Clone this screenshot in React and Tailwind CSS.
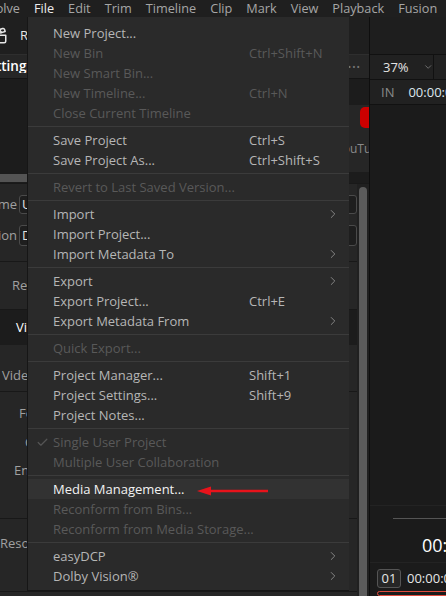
import React from "react";
import { ChevronRight, ChevronDown, Check, Clapperboard } from "lucide-react";

const bar = ["File", "Edit", "Trim", "Timeline", "Clip", "Mark", "View", "Playback", "Fusion"];

const items = [
  { label: "New Project..." },
  { label: "New Bin", keys: "Ctrl+Shift+N", off: true },
  { label: "New Smart Bin...", off: true },
  { label: "New Timeline...", keys: "Ctrl+N", off: true },
  { label: "Close Current Timeline", off: true },
  "sep",
  { label: "Save Project", keys: "Ctrl+S" },
  { label: "Save Project As...", keys: "Ctrl+Shift+S" },
  "sep",
  { label: "Revert to Last Saved Version...", off: true },
  "sep",
  { label: "Import", sub: true },
  { label: "Import Project..." },
  { label: "Import Metadata To", sub: true },
  "sep",
  { label: "Export", sub: true },
  { label: "Export Project...", keys: "Ctrl+E" },
  { label: "Export Metadata From", sub: true },
  "sep",
  { label: "Quick Export...", off: true },
  "sep",
  { label: "Project Manager...", keys: "Shift+1" },
  { label: "Project Settings...", keys: "Shift+9" },
  { label: "Project Notes..." },
  "sep",
  { label: "Single User Project", off: true, check: true },
  { label: "Multiple User Collaboration", off: true },
  "sep",
  { label: "Media Management...", active: true, arrow: true },
  { label: "Reconform from Bins...", off: true },
  { label: "Reconform from Media Storage...", off: true },
  "sep",
  { label: "easyDCP", sub: true },
  { label: "Dolby Vision®", sub: true },
];

function MenuRow({ item }) {
  if (item === "sep") {
    return (
      <div className="h-[7px] flex items-center">
        <div className="h-px w-full bg-[#3b3b3b]" />
      </div>
    );
  }
  const color = item.active ? "text-[#f2f2f2]" : item.off ? "text-[#595959]" : "text-[#b6b6b6]";
  return (
    <div className={`relative h-[20px] flex items-center ${item.active ? "bg-[#323232]" : ""} ${color}`}>
      <div className="w-[25px] flex justify-center pl-[3px]">
        {item.check && <Check size={13} strokeWidth={2.2} className="text-[#555]" />}
      </div>
      <span className="w-[196px] whitespace-nowrap">{item.label}</span>
      <span className="flex-1 whitespace-nowrap">{item.keys}</span>
      {item.sub && <ChevronRight size={14} strokeWidth={1.6} className="text-[#8a8a8a] mr-[9px]" />}
      {item.arrow && (
        <svg className="absolute left-[168px] top-[6px]" width="74" height="12" viewBox="0 0 74 12">
          <line x1="12" y1="6" x2="72" y2="6" stroke="#e8131b" strokeWidth="2.6" />
          <polygon points="1,6 15,1.5 15,10.5" fill="#e8131b" />
        </svg>
      )}
    </div>
  );
}

function Clip({ text, w, className = "" }) {
  return (
    <div className={`shrink-0 flex justify-end overflow-hidden whitespace-nowrap ${className}`} style={{ width: w }}>
      <span>{text}</span>
    </div>
  );
}

export default function App() {
  return (
    <div className="relative w-[446px] h-[596px] overflow-hidden bg-[#1c1c1c] font-['Open_Sans',sans-serif] text-[13px] leading-none">
      {/* menu bar */}
      <div className="h-[17px] flex items-center gap-[14px] bg-[#1f1f1f] text-[#a6a6a6] text-[12.7px]">
        <Clip text="DaVinci Resolve" w={20} />
        {bar.map((b) => (
          <span key={b} className={b === "File" ? "text-[#ececec]" : ""}>{b}</span>
        ))}
      </div>

      <div className="flex h-[579px]">
        {/* left panel */}
        <div className="w-[369px] shrink-0 flex flex-col">
          <div className="h-[38px] shrink-0 flex items-center gap-[12px] bg-[#1f1f1f] border-b border-[#2e2e2e]">
            <Clapperboard size={18} strokeWidth={2} className="text-[#e6e6e6] -ml-[10px]" />
            <span className="text-[#e6e6e6]">Render Queue</span>
          </div>
          <div className="h-[24px] shrink-0 flex items-center justify-between bg-[#262626] border-b border-[#141414] pr-[8px]">
            <Clip text="Render Settings" w={33} className="text-white font-semibold text-[13.5px]" />
            <span className="text-[#777] text-[9px] tracking-[1px]">•••</span>
          </div>
          <div className="h-[104px] shrink-0 flex flex-col bg-[#1c1c1c]">
            <div className="flex-1 flex pt-[26px] justify-end">
              <div className="w-[33px] h-[67px] bg-[#262626] overflow-hidden flex flex-col">
                <div className="pl-[24px] pt-[2px]">
                  <div className="w-[30px] h-[21px] rounded-[5px] bg-[#cc0000]" />
                </div>
                <span className="mt-[15px] text-[#8a8a8a] text-[12px] whitespace-nowrap">YouTube</span>
              </div>
            </div>
            <div className="h-[8px] w-[220px] bg-[#545454] mb-[1px]" />
          </div>

          <div className="flex-1 min-h-0 flex bg-[#262626] border-t border-[#191919]">
            <div className="w-[357px] flex flex-col text-[#a0a0a0] overflow-hidden">
              <div className="shrink-0 pt-[11px] pb-[15px] flex flex-col gap-[11px] border-b border-[#181818]">
                <div className="flex items-center gap-[2px]">
                  <Clip text="File name" w={17} />
                  <div className="h-[19px] flex-1 rounded-[3px] border border-[#4a4a4a] bg-[#1e1e1e] text-[#e0e0e0] flex items-center pl-[2px]">Untitled</div>
                </div>
                <div className="flex items-center gap-[2px]">
                  <Clip text="Location" w={17} />
                  <div className="h-[21px] flex-1 rounded-[3px] border border-[#4a4a4a] bg-[#1e1e1e] text-[#e0e0e0] flex items-center pl-[2px]">D:\</div>
                </div>
              </div>
              <div className="h-[48px] shrink-0 flex items-center pl-[12px] border-b border-[#181818]">Render</div>
              <div className="h-[35px] shrink-0 flex items-center pl-[16px] bg-[#1c1c1c] text-white">Video</div>
              <div className="h-[47px] shrink-0 flex items-center pt-[14px] border-b border-[#181818]">
                <Clip text="Export Video" w={36} />
              </div>
              <div className="h-[127px] shrink-0 flex flex-col pt-[15px] gap-[15.5px] border-b border-[#181818]">
                <span className="pl-[19px]">Format</span>
                <span className="pl-[25px]">Codec</span>
                <span className="pl-[14px]">Encoder</span>
              </div>
              <div className="h-[73px] shrink-0 pt-[18px] border-b border-[#181818]">Resolution</div>
              <div className="flex-1 min-h-0 pt-[4px]">Frame rate</div>
            </div>
            <div className="flex-1 bg-[#202020] flex pl-[2px] pt-[3px]">
              <div className="w-[8px] h-full rounded-t-[4px] bg-[#5b5b5b]" />
            </div>
          </div>
        </div>

        <div className="w-px shrink-0 bg-[#0e0e0e]" />

        {/* viewer */}
        <div className="flex-1 flex flex-col bg-[#1b1b1b]">
          <div className="h-[38px] shrink-0 bg-[#1e1e1e] border-b border-[#111]" />
          <div className="h-[25px] shrink-0 flex bg-[#212121] border-b border-[#111]">
            <div className="w-[64px] flex items-center pl-[13px] gap-[14px] border-r border-[#111]">
              <span className="text-[#e4e4e4]">37%</span>
              <ChevronDown size={12} strokeWidth={2} className="text-[#777]" />
            </div>
          </div>
          <div className="h-[25px] shrink-0 flex items-center pl-[11px] gap-[14px] bg-[#212121] border-b border-[#111] whitespace-nowrap">
            <span className="text-[#8a8a8a]">IN</span>
            <span className="text-[#dde6ee]">00:00:00:00</span>
          </div>
          <div className="flex-1" />
          <div className="h-[58px] shrink-0 flex flex-col border-t border-[#232323] border-b border-[#111]">
            <div className="h-px ml-[23px] mt-[12px] bg-[#555]" />
            <span className="mt-[17px] ml-[52px] text-white text-[18px] whitespace-nowrap">00:00:00</span>
          </div>
          <div className="h-[33px] shrink-0 flex flex-col pt-[6px] pl-[7px]">
            <div className="flex items-center gap-[6px] whitespace-nowrap">
              <span className="w-[24px] h-[19px] rounded-[3px] border border-[#555] bg-[#262626] text-[#e6e6e6] flex items-center justify-center">01</span>
              <span className="text-[#e6e6e6]">00:00:00:00</span>
            </div>
            <div className="mt-[3px] h-[10px] rounded-[3px] border border-[#e04a3c]" />
          </div>
        </div>
      </div>

      {/* File menu */}
      <div className="absolute left-[27px] top-[17px] w-[322px] h-[574px] bg-[#2a2a2a] border-l border-b border-[#161616] pt-[6px]">
        {items.map((it, i) => (
          <MenuRow key={i} item={it} />
        ))}
      </div>
    </div>
  );
}
